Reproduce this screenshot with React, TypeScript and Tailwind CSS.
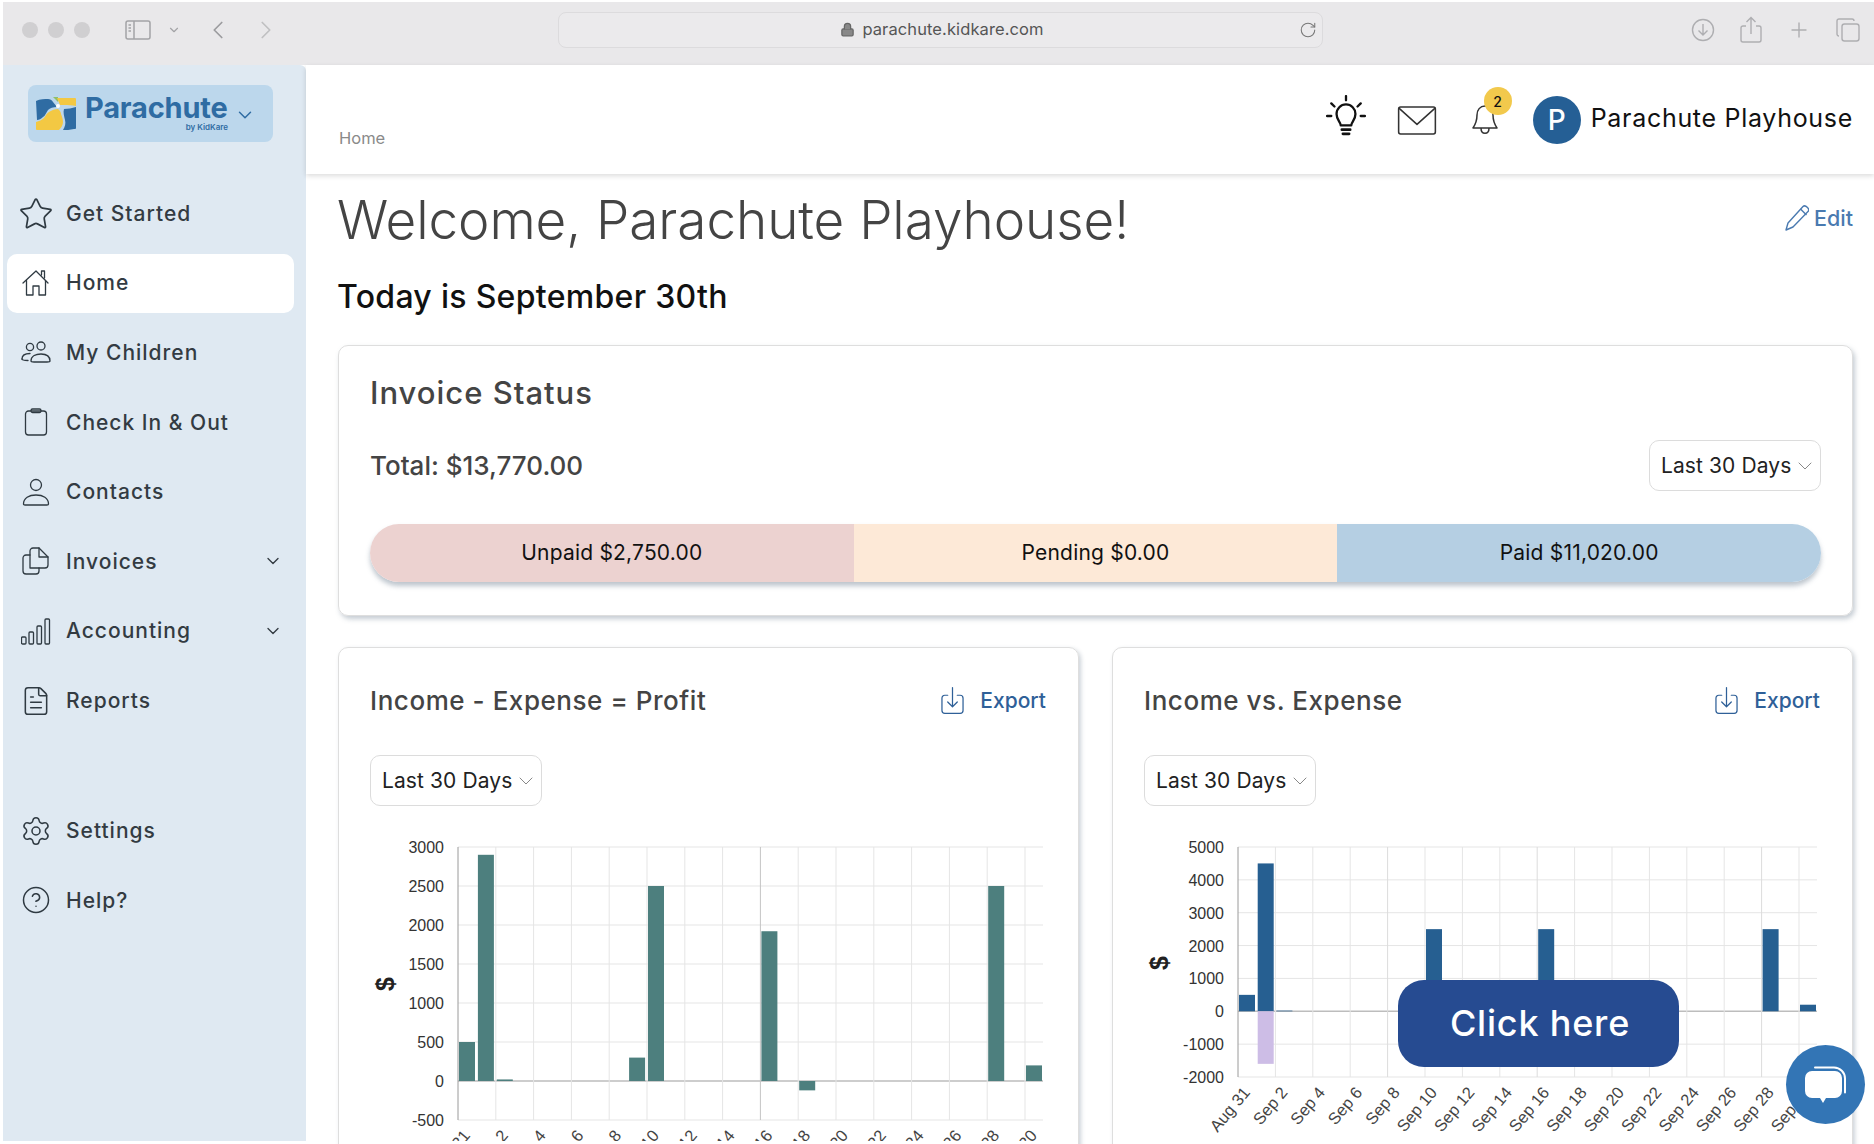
import { Star, Settings, CircleHelp, ChevronDown, ChevronLeft, ChevronRight, Lock, RotateCw, Plus, FileText } from "lucide-react";
import type { ReactNode } from "react";

const FONT = "font-['Inter','Open_Sans',sans-serif]";

const IconBox = ({ children }: { children: ReactNode }) => (
  <svg viewBox="0 0 30 30" className="h-[30px] w-[30px] shrink-0" fill="none" stroke="#2f3a42" strokeWidth="1.3" strokeLinecap="round" strokeLinejoin="round">
    {children}
  </svg>
);

const HomeIcon = () => (
  <IconBox>
    <path d="M2 15 15 3l12 12" />
    <path d="M5.5 12.5V27h6.5v-9h6v9h6.5V12.5" />
    <path d="M20.5 7V3h3v7" />
  </IconBox>
);
const ChildrenIcon = () => (
  <IconBox>
    <circle cx="9" cy="9" r="3.6" />
    <circle cx="20" cy="8" r="4" />
    <path d="M1 21c0-4 4-5.500 8-5.500M10 23c0-5 5-7 10-7s9 2 9 7c0 1-1 1-3 1H13c-2 0-3 0-3-1Z" />
    <path d="M1 21c0 1 1 1.500 6 1.500" />
  </IconBox>
);
const ClipboardIcon = () => (
  <IconBox>
    <rect x="4.500" y="4" width="21" height="24" rx="3" />
    <rect x="10" y="2" width="10" height="3.500" rx="1.500" />
  </IconBox>
);
const ContactIcon = () => (
  <IconBox>
    <circle cx="15" cy="8" r="5.500" />
    <path d="M2.500 27c0-6 5.500-9 12.500-9s12.500 3 12.500 9c0 .7-.5 1-1.500 1H4c-1 0-1.500-.3-1.500-1Z" />
  </IconBox>
);
const InvoicesIcon = () => (
  <IconBox>
    <path d="M9 9H5a3 3 0 0 0-3 3v13a3 3 0 0 0 3 3h10a3 3 0 0 0 3-3v-3" />
    <path d="M9 22V5a3 3 0 0 1 3-3h6l9 9v8a3 3 0 0 1-3 3H9Z" />
    <path d="M18 2v9h9" />
  </IconBox>
);
const AccountingIcon = () => (
  <IconBox>
    <rect x="0.500" y="21" width="4.500" height="7" rx="1" />
    <rect x="8" y="16" width="4.500" height="12" rx="1" />
    <rect x="16" y="10" width="4.500" height="18" rx="1" />
    <rect x="24" y="3" width="4.500" height="25" rx="1" />
  </IconBox>
);

type NavRow = { label: string; icon: ReactNode; active?: boolean; caret?: boolean };

const topNav: NavRow[] = [
  { label: "Get Started", icon: <Star size={36} strokeWidth={1.15} color="#2f3a42" className="-mx-[3px] shrink-0" /> },
  { label: "Home", icon: <HomeIcon />, active: true },
  { label: "My Children", icon: <ChildrenIcon /> },
  { label: "Check In & Out", icon: <ClipboardIcon /> },
  { label: "Contacts", icon: <ContactIcon /> },
  { label: "Invoices", icon: <InvoicesIcon />, caret: true },
  { label: "Accounting", icon: <AccountingIcon />, caret: true },
  { label: "Reports", icon: <FileText size={32} strokeWidth={1.15} color="#2f3a42" className="-mx-[1px] shrink-0" /> },
];
const bottomNav: NavRow[] = [
  { label: "Settings", icon: <Settings size={32} strokeWidth={1.15} color="#2f3a42" className="-mx-[1px] shrink-0" /> },
  { label: "Help?", icon: <CircleHelp size={30} strokeWidth={1.2} color="#2f3a42" className="shrink-0" /> },
];

const NavItem = ({ row }: { row: NavRow }) => (
  <div className={`flex h-[59px] items-center gap-[15px] rounded-[10px] pl-[14px] pr-[11px] ${row.active ? "bg-white" : ""}`}>
    {row.icon}
    <span className="flex-1 text-[21px] font-medium tracking-[1px] text-[#333b42]">{row.label}</span>
    {row.caret ? <ChevronDown size={20} strokeWidth={1.6} color="#333b42" /> : null}
  </div>
);

const LogoMark = () => (
  <svg viewBox="0 0 40 34" className="h-[34px] w-[40px] shrink-0">
    <path d="M0 4c4-2 9-2 12-2 2 0 4 1 5 3l4 5c-4 0-7 1-9 3-2 3-3 6-5 7-2 2-4 3-6 3Z" fill="#2f6ca3" />
    <path d="M17 0h5v5Z" fill="#8fbf6a" />
    <path d="M21 1h18c1 0 1 1 1 1v7c-4-1-8-1-12-1h-4Z" fill="#f3c843" />
    <path d="M28 12c4 0 8-1 12-2v21c0 1-1 1-2 1-4 1-8 1-11 1 2-3 3-7 2-10-1-4-2-8-1-11Z" fill="#2f6ca3" />
    <path d="M0 25c3-1 6-2 8-4 2-3 3-5 5-6 3-2 6-3 9-3 2 2 3 3 3 5 1 3 2 5 2 8 0 3-2 6-4 8H2c-1 0-2 0-2-1Z" fill="#f3c843" />
    <circle cx="22" cy="9" r="2" fill="#fff" />
  </svg>
);

const Select = ({ className = "" }: { className?: string }) => (
  <div className={`flex h-[51px] w-[172px] items-center justify-between rounded-[10px] border border-[#dcdcdc] bg-white pl-[11px] pr-[3px] text-[21px] text-[#222] ${className}`}>
    <span className="tracking-[0.1px]">Last 30 Days</span>
    <ChevronDown size={24} strokeWidth={1} color="#888" />
  </div>
);

const ExportLink = () => (
  <div className="flex items-center gap-[16px] text-[21px] font-medium text-[#2f6098]">
    <svg viewBox="0 0 24 30" className="h-[30px] w-[23px]" fill="none" stroke="#2f6098" strokeWidth="1.3" strokeLinecap="round" strokeLinejoin="round">
      <path d="M7 9H4a3 3 0 0 0-3 3v13a3 3 0 0 0 3 3h16a3 3 0 0 0 3-3V12a3 3 0 0 0-3-3h-3" />
      <path d="M12 1v20M7 16 12 21l5-5" />
    </svg>
    <span>Export</span>
  </div>
);

type Bar = { k: number; v: number; color?: string };
type ChartProps = {
  originX: number;
  axisX: number;
  slot: number;
  top: number;
  bottom: number;
  right: number;
  ticks: number[];
  bars: Bar[];
  color: string;
  dollarY: number;
  darkLines?: number[];
  darkColor?: string;
};

const dayLabels = ["Aug 31", "Sep 2", "Sep 4", "Sep 6", "Sep 8", "Sep 10", "Sep 12", "Sep 14", "Sep 16", "Sep 18", "Sep 20", "Sep 22", "Sep 24", "Sep 26", "Sep 28", "Sep 30"];

const Chart = ({ originX, axisX, slot, top, bottom, right, ticks, bars, color, dollarY, darkLines = [], darkColor = "#c4c4c4" }: ChartProps) => {
  const max = ticks[0];
  const min = ticks[ticks.length - 1];
  const y = (v: number) => top + ((max - v) / (max - min)) * (bottom - top);
  return (
    <svg viewBox={`${originX} 840 740 301`} className="mt-[34px] block h-[301px] w-[740px]" fontFamily="'Liberation Sans',Arial,sans-serif">
      {ticks.map((t) => (
        <g key={t}>
          <line x1={axisX} x2={right} y1={y(t)} y2={y(t)} stroke={t === 0 ? "#bdbdbd" : "#e5e5e5"} strokeWidth={t === 0 ? 1.5 : 1} />
          <text x={axisX - 14} y={y(t) + 6} textAnchor="end" fontSize="16" fill="#333">{t}</text>
        </g>
      ))}
      {dayLabels.map((label, i) => {
        const x = axisX + i * slot * 2;
        return (
          <g key={label}>
            <line x1={x} x2={x} y1={top} y2={bottom} stroke={i === 0 ? "#9a9a9a" : darkLines.includes(i) ? darkColor : "#e5e5e5"} />
            <text transform={`translate(${x + 13} ${bottom + 16}) rotate(-50)`} textAnchor="end" fontSize="16.5" fill="#444">{label}</text>
          </g>
        );
      })}
      {bars.map((b) => {
        const x = axisX + b.k * slot + 1;
        const y0 = y(0);
        const yv = y(b.v);
        return <rect key={`${b.k}-${b.v}`} x={x} y={Math.min(y0, yv)} width={16} height={Math.abs(y0 - yv)} fill={b.color ?? color} />;
      })}
      <text transform={`translate(${originX + 55} ${dollarY}) rotate(-90)`} textAnchor="middle" fontSize="25" fontWeight="700" fill="#222">$</text>
    </svg>
  );
};

const profitBars: Bar[] = [
  { k: 0, v: 500 }, { k: 1, v: 2900 }, { k: 2, v: 20 }, { k: 9, v: 300 }, { k: 10, v: 2500 },
  { k: 16, v: 1920 }, { k: 18, v: -120 }, { k: 28, v: 2500 }, { k: 30, v: 200 },
];
const incomeBars: Bar[] = [
  { k: 0, v: 500 }, { k: 1, v: 4500 }, { k: 1, v: -1600, color: "#cdbde6" }, { k: 2, v: 20 }, { k: 10, v: 2500 },
  { k: 16, v: 2500 }, { k: 28, v: 2500 }, { k: 30, v: 200 },
];

const ChartCard = ({ title, children }: { title: string; children: ReactNode }) => (
  <div className="rounded-t-[10px] border border-[#dedede] pb-[20px] shadow-[2px_2px_4px_rgba(90,110,130,0.3)]">
    <div className="flex h-[107px] items-center justify-between pb-[2px] pl-[31px] pr-[32px]">
      <h3 className="text-[26px] font-medium tracking-[0.55px] text-[#444]">{title}</h3>
      <ExportLink />
    </div>
    <Select className="ml-[31px]" />
    {children}
  </div>
);

const App = () => (
  <div className={`relative flex h-[1144px] w-[1874px] flex-col overflow-hidden bg-white pb-[3px] pl-[3px] pt-[2px] ${FONT}`}>
    {/* browser chrome */}
    <div className="flex h-[63px] shrink-0 items-center bg-[#e9e8ea] pb-[8px] pl-[19px] pr-[14px]">
      <div className="flex gap-[10px]">
        <span className="h-[16px] w-[16px] rounded-full bg-[#d0cfd1]" />
        <span className="h-[16px] w-[16px] rounded-full bg-[#d0cfd1]" />
        <span className="h-[16px] w-[16px] rounded-full bg-[#d0cfd1]" />
      </div>
      <svg viewBox="0 0 26 20" className="ml-[35px] h-[20px] w-[26px]" fill="none" stroke="#a3a3a6" strokeWidth="1.5">
        <rect x="1" y="1" width="24" height="18" rx="2" />
        <path d="M9 1v18M3.500 5H6M3.500 8H6M3.500 11H6" />
      </svg>
      <ChevronDown size={14} strokeWidth={2} color="#a3a3a6" className="ml-[16px]" />
      <ChevronLeft size={30} strokeWidth={1.4} color="#9c9c9f" className="ml-[22px]" />
      <ChevronRight size={30} strokeWidth={1.4} color="#c0c0c2" className="ml-[18px]" />
      <div className="ml-[277px] flex h-[36px] w-[765px] items-center rounded-[8px] border border-[#dcdbdd] bg-[#ebeaec] pr-[5px]">
        <div className="flex flex-1 items-center justify-center gap-[7px] pl-[26px] text-[16.5px] text-[#555]">
          <Lock size={15} strokeWidth={2} color="#666" fill="#888" />
          <span className="tracking-[0.1px]">parachute.kidkare.com</span>
        </div>
        <RotateCw size={18} strokeWidth={1.4} color="#777" />
      </div>
      <div className="ml-auto flex items-center gap-[25px]">
        <svg viewBox="0 0 24 24" className="h-[24px] w-[24px]" fill="none" stroke="#aeaeb1" strokeWidth="1.4"><circle cx="12" cy="12" r="10.500" /><path d="M12 6v11M7.500 12.500 12 17l4.500-4.500" /></svg>
        <svg viewBox="0 0 22 28" className="h-[28px] w-[22px]" fill="none" stroke="#aeaeb1" strokeWidth="1.4"><path d="M6 10H3a2 2 0 0 0-2 2v12a2 2 0 0 0 2 2h16a2 2 0 0 0 2-2V12a2 2 0 0 0-2-2h-3M11 18V2M6.500 6 11 1.500 15.500 6" /></svg>
        <Plus size={24} strokeWidth={1.4} color="#aeaeb1" />
        <svg viewBox="0 0 24 24" className="h-[24px] w-[24px]" fill="none" stroke="#aeaeb1" strokeWidth="1.4"><rect x="6" y="6" width="17" height="17" rx="2.500" /><path d="M3 18a2 2 0 0 1-2-2V3a2 2 0 0 1 2-2h13a2 2 0 0 1 2 2" /></svg>
      </div>
    </div>

    <div className="flex min-h-0 flex-1">
      {/* sidebar */}
      <aside className="w-[303px] shrink-0 rounded-tr-[6px] bg-[#dfe9f2] pl-[4px] pr-[12px]">
        <div className="ml-[21px] mt-[20px] flex h-[57px] w-[245px] items-center rounded-[8px] bg-[#bcd7ec] pl-[8px]">
          <LogoMark />
          <div className="-mt-[4px] ml-[9px] flex w-[143px] flex-col leading-none">
            <span className="text-[29px] font-bold tracking-[-0.2px] text-[#2f6ca3]">Parachute</span>
            <span className="mt-[1px] self-end text-[8px] font-semibold text-[#2f6ca3]">by KidKare</span>
          </div>
          <ChevronDown size={22} strokeWidth={1.6} color="#2f6ca3" className="ml-[6px] mt-[2px]" />
        </div>
        <nav className="mt-[42px] flex flex-col gap-[10.6px]">
          {topNav.map((row) => <NavItem key={row.label} row={row} />)}
        </nav>
        <nav className="mt-[71px] flex flex-col gap-[10.6px]">
          {bottomNav.map((row) => <NavItem key={row.label} row={row} />)}
        </nav>
      </aside>

      <main className="min-w-0 flex-1">
        <header className="relative flex h-[109px] items-start justify-between pl-[33px] pr-[21px] shadow-[0_2px_5px_rgba(0,0,0,0.14)]">
          <span className="mt-[61px] text-[16.5px] text-[#8a8a8a]">Home</span>
          <div className="flex items-center pt-[30px]">
            <svg viewBox="0 0 38 40" className="mb-[7px] h-[42px] w-[40px]" fill="none" stroke="#111" strokeWidth="2.2" strokeLinecap="round" strokeLinejoin="round">
              <path d="M19 1v4M5 8l3 3M33 8l-3 3M1 20h4M33 20h4" />
              <path d="M14 29c0-3-4-5-4-11a9 9 0 0 1 18 0c0 6-4 8-4 11Z" />
              <path d="M15 33h8M16 37h6" strokeWidth="2.500" />
            </svg>
            <svg viewBox="0 0 40 30" className="ml-[31px] mt-[2px] h-[29px] w-[40px]" fill="none" stroke="#333" strokeWidth="1.6" strokeLinejoin="round">
              <rect x="1" y="1" width="38" height="28" rx="2" />
              <path d="m1 2 19 17L39 2" />
            </svg>
            <div className="relative ml-[35px] mt-[1px]">
              <svg viewBox="0 0 26 30" className="h-[30px] w-[26px]" fill="none" stroke="#333" strokeWidth="1.5" strokeLinejoin="round">
                <path d="M13 1c-5 0-8 4-8 9 0 7-2 10-4 13h24c-2-3-4-6-4-13 0-5-3-9-8-9ZM9 23c0 7 8 7 8 0" />
              </svg>
              <span className="absolute -top-[18px] left-[12px] flex h-[28px] w-[28px] items-center justify-center rounded-full bg-[#f2c94c] text-[14px] font-medium text-[#111]">2</span>
            </div>
            <span className="ml-[35px] flex h-[48px] w-[48px] items-center justify-center rounded-full bg-[#255f95] text-[28px] font-medium text-white">P</span>
            <span className="mb-[2px] ml-[10px] text-[25px] tracking-[0.7px] text-[#111]">Parachute Playhouse</span>
          </div>
        </header>

        <div className="pl-[32px] pr-[21px]">
          <div className="mt-[12px] flex items-center justify-between">
            <h1 className="-ml-[1px] text-[53px] font-light leading-[68px] tracking-[-0.05px] text-[#444]">Welcome, Parachute Playhouse!</h1>
            <div className="flex items-center gap-[5px] pb-[4px] text-[21.5px] font-medium text-[#4a7ab0]">
              <svg viewBox="0 0 24 26" className="h-[26px] w-[24px]" fill="none" stroke="#4a7ab0" strokeWidth="1.4" strokeLinejoin="round">
                <path d="M18 1.500c1-1 3-.5 4.500 1s1.500 3 .5 4L8 22l-7 3 2-7Z" />
                <path d="m15.500 4 6 6" />
              </svg>
              <span>Edit</span>
            </div>
          </div>
          <h2 className="-ml-[1px] mt-[23px] text-[32px] font-medium leading-[40px] tracking-[0.3px] text-[#111]">Today is September 30th</h2>

          {/* invoice status */}
          <section className="mt-[28px] h-[271px] rounded-[10px] border border-[#dedede] px-[31px] shadow-[2px_3px_5px_rgba(90,110,130,0.35)]">
            <h3 className="pt-[27px] text-[31px] font-medium leading-[40px] tracking-[1px] text-[#444]">Invoice Status</h3>
            <div className="mt-[27px] flex h-[51px] items-center justify-between">
              <span className="text-[26px] font-medium text-[#444]">Total: $13,770.00</span>
              <Select />
            </div>
            <div className="mt-[33px] flex h-[58px] overflow-hidden rounded-full text-[21px] tracking-[0.2px] text-[#111] shadow-[0_4px_5px_rgba(90,110,130,0.4)]">
              <div className="flex flex-1 items-center justify-center bg-[#ecd2d0]">Unpaid $2,750.00</div>
              <div className="flex flex-1 items-center justify-center bg-[#fde9d7]">Pending $0.00</div>
              <div className="flex flex-1 items-center justify-center bg-[#b5cfe3]">Paid $11,020.00</div>
            </div>
          </section>

          <div className="mt-[31px] grid grid-cols-2 gap-[33px]">
            <ChartCard title="Income - Expense = Profit">
              <Chart originX={339} axisX={458} slot={18.9} top={847} bottom={1120} right={1043} ticks={[3000, 2500, 2000, 1500, 1000, 500, 0, -500]} bars={profitBars} color="#4d7f7e" dollarY={984} darkLines={[8]} />
            </ChartCard>
            <ChartCard title="Income vs. Expense">
              <Chart originX={1113} axisX={1238} slot={18.7} top={847} bottom={1077} right={1817} ticks={[5000, 4000, 3000, 2000, 1000, 0, -1000, -2000]} bars={incomeBars} color="#265f91" dollarY={963} darkLines={[4, 8, 14]} darkColor="#dcdcdc" />
            </ChartCard>
          </div>
        </div>
      </main>
    </div>

    {/* floating overlays */}
    <button className="absolute left-[1398px] top-[980px] flex h-[87px] w-[281px] items-center justify-center rounded-[26px] bg-[#264b91] pb-[2px] pl-[3px] text-[36px] font-medium tracking-[0.8px] text-white">Click here</button>
    <div className="absolute left-[1786px] top-[1045px] flex h-[79px] w-[79px] items-center justify-center rounded-full bg-[#3375b5]">
      <svg viewBox="0 0 42 38" className="h-[38px] w-[42px]">
        <path d="M10 1.500h19a11 11 0 0 1 11 11v14" fill="none" stroke="#fff" strokeWidth="2" strokeLinecap="round" />
        <path d="M7 5h23a7 7 0 0 1 7 7v13a7 7 0 0 1-7 7h-9l-3 5-3-5H7a7 7 0 0 1-7-7V12a7 7 0 0 1 7-7Z" fill="#fff" />
      </svg>
    </div>
  </div>
);

export default App;
